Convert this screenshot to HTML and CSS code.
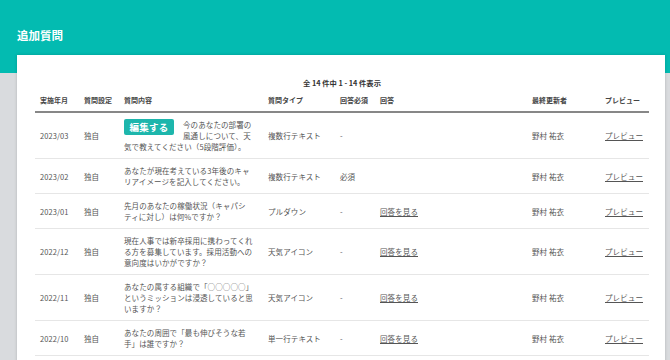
FILE: index.html
```html
<!DOCTYPE html>
<html lang="ja">
<head>
<meta charset="utf-8">
<link rel="stylesheet" href="styles.css">
</head>
<body>
<header class="page-header">
  <h1 class="page-title">追加質問</h1>
</header>
<main class="card">
  <p class="summary">全 14 件中 1 - 14 件表示</p>
  <table class="qtable">
    <colgroup>
      <col class="c-date"><col class="c-set"><col class="c-body"><col class="c-type"><col class="c-req"><col class="c-ans"><col class="c-user"><col class="c-prev">
    </colgroup>
    <thead>
      <tr>
        <th>実施年月</th><th>質問設定</th><th>質問内容</th><th>質問タイプ</th><th>回答必須</th><th>回答</th><th>最終更新者</th><th>プレビュー</th>
      </tr>
    </thead>
    <tbody>
      <tr>
        <td>2023/03</td><td>独自</td>
        <td class="qtext"><span class="edit-btn">編集する</span>今のあなたの部署の風通しについて、天気で教えてください（5段階評価）。</td>
        <td>複数行テキスト</td><td>-</td><td></td><td class="user">野村 祐衣</td><td><a class="link" href="#">プレビュー</a></td>
      </tr>
      <tr>
        <td>2023/02</td><td>独自</td>
        <td class="qtext">あなたが現在考えている3年後のキャリアイメージを記入してください。</td>
        <td>複数行テキスト</td><td>必須</td><td></td><td class="user">野村 祐衣</td><td><a class="link" href="#">プレビュー</a></td>
      </tr>
      <tr>
        <td>2023/01</td><td>独自</td>
        <td class="qtext">先月のあなたの稼働状況（キャパシティに対し）は何%ですか？</td>
        <td>プルダウン</td><td>-</td><td><a class="link" href="#">回答を見る</a></td><td class="user">野村 祐衣</td><td><a class="link" href="#">プレビュー</a></td>
      </tr>
      <tr>
        <td>2022/12</td><td>独自</td>
        <td class="qtext">現在人事では新卒採用に携わってくれる方を募集しています。採用活動への意向度はいかがですか？</td>
        <td>天気アイコン</td><td>-</td><td><a class="link" href="#">回答を見る</a></td><td class="user">野村 祐衣</td><td><a class="link" href="#">プレビュー</a></td>
      </tr>
      <tr>
        <td>2022/11</td><td>独自</td>
        <td class="qtext">あなたの属する組織で「○○○○○」というミッションは浸透していると思いますか？</td>
        <td>天気アイコン</td><td>-</td><td><a class="link" href="#">回答を見る</a></td><td class="user">野村 祐衣</td><td><a class="link" href="#">プレビュー</a></td>
      </tr>
      <tr>
        <td>2022/10</td><td>独自</td>
        <td class="qtext">あなたの周囲で「最も伸びそうな若手」は誰ですか？</td>
        <td>単一行テキスト</td><td>-</td><td><a class="link" href="#">回答を見る</a></td><td class="user">野村 祐衣</td><td><a class="link" href="#">プレビュー</a></td>
      </tr>
    </tbody>
  </table>
</main>
</body>
</html>
```
FILE: styles.css
```css
html, body {
  margin: 0;
  padding: 0;
}
body {
  width: 670px;
  height: 360px;
  overflow: hidden;
  font-family: "Noto Sans CJK JP", "Noto Sans", sans-serif;
  background: linear-gradient(#03bbb1 0, #03bbb1 73px, #d9dbde 73px);
  color: #555;
}
.page-header {
  height: 55px;
  box-sizing: border-box;
  padding: 28px 0 0 17px;
}
.page-title {
  margin: 0;
  font-size: 11.5px;
  line-height: 14px;
  font-weight: bold;
  color: #fff;
}
.card {
  display: block;
  margin: 0 5px 0 17px;
  padding: 22px 16px 0 18px;
  background: #fff;
  box-shadow: 0 0 3px rgba(0, 0, 0, 0.18);
  height: 400px;
}
.summary {
  margin: 0;
  text-align: center;
  font-size: 7.3px;
  line-height: 12px;
  font-weight: bold;
  color: #333;
}
.qtable {
  width: 614px;
  table-layout: fixed;
  border-collapse: collapse;
}
.c-date { width: 44px; }
.c-set { width: 40px; }
.c-body { width: 144px; }
.c-type { width: 72px; }
.c-req { width: 40px; }
.c-ans { width: 152px; }
.c-user { width: 73px; }
.c-prev { width: 49px; }
.qtable th {
  text-align: left;
  font-size: 7px;
  font-weight: bold;
  color: #444;
  line-height: 10px;
  padding: 6px 0 6px 5px;
  border-bottom: 2px solid #878787;
  white-space: nowrap;
}
.qtable td {
  font-size: 7.5px;
  letter-spacing: 0.1px;
  line-height: 11px;
  padding: 6px 0 6px 5px;
  vertical-align: middle;
  border-bottom: 1px solid #e6e6e6;
  white-space: nowrap;
}
.qtable td.qtext {
  white-space: normal;
  padding-right: 8px;
  line-break: strict;
}
.edit-btn {
  float: left;
  margin: 0 9px 0 0;
  width: 50px;
  height: 16px;
  line-height: 16px;
  text-align: center;
  background: #1db6ac;
  color: #fff;
  font-size: 9.5px;
  font-weight: bold;
  letter-spacing: 0.3px;
  border-radius: 2px;
}
.link {
  color: #555;
  text-decoration: underline;
}
```
